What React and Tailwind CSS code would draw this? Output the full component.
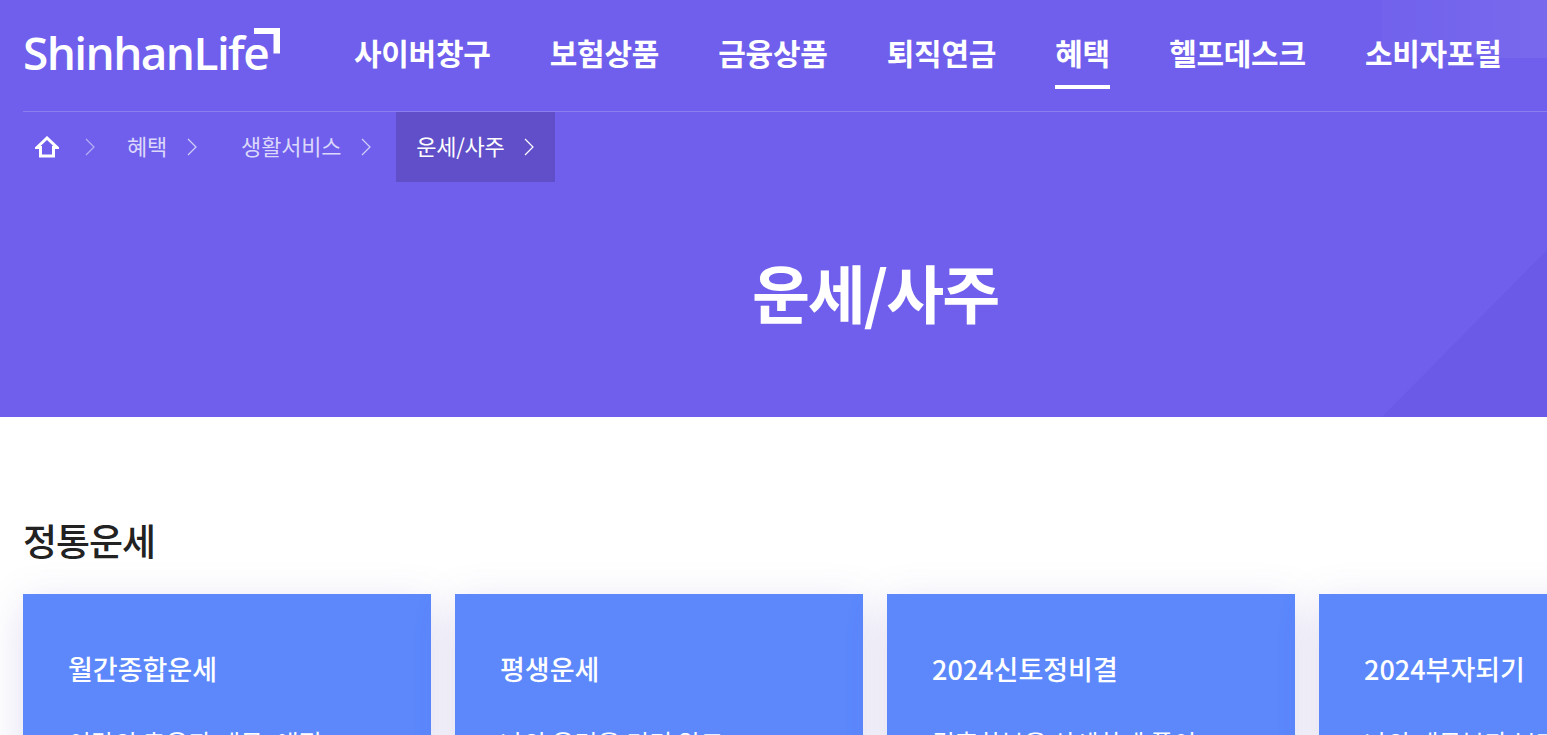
import React from 'react';

const font = { fontFamily: '"Noto Sans CJK KR", "Noto Sans", sans-serif' };

const menus = [
  { label: '사이버창구' },
  { label: '보험상품' },
  { label: '금융상품' },
  { label: '퇴직연금' },
  { label: '혜택', active: true },
  { label: '헬프데스크' },
  { label: '소비자포털' },
];

const cards = [
  { title: '월간종합운세', desc: '이달의 총운과 재물, 애정' },
  { title: '평생운세', desc: '나의 운명을 미리 알고' },
  { title: '2024신토정비결', desc: '길흉화복을 상세하게 풀이' },
  { title: '2024부자되기', desc: '나의 재물복과 부자가 될' },
];

const Crumb = ({ className }) => (
  <svg className={className} width="10" height="18" viewBox="0 0 10 18" fill="none" stroke="currentColor" strokeWidth="1.2">
    <path d="M1 1L9 9L1 17" />
  </svg>
);

const Logo = () => (
  <div className="relative w-[258px] h-[46px] mt-[28px]">
    <span className="absolute left-0 top-[-4px] text-[46px] leading-[56px] font-semibold tracking-[-1.6px] text-white font-['Open_Sans',sans-serif] whitespace-nowrap">
      ShinhanLife
    </span>
    <svg className="absolute right-[1px] top-0" width="26" height="26" viewBox="0 0 26 26" fill="none">
      <path d="M0 0H26V25.5H19.5V6H0Z" fill="white" />
    </svg>
  </div>
);

const App = () => {
  return (
    <div className="w-[1547px] h-[735px] overflow-hidden bg-white" style={font}>
      <div className="relative h-[417px] bg-[#6f5fec] overflow-hidden">
        {/* background shapes */}
        <div className="absolute right-0 top-0 w-[165px] h-[58px] bg-linear-to-r from-white/[0.02] to-white/[0.06]" />
        <svg className="absolute right-0 top-[250px]" width="165" height="167" viewBox="0 0 165 167">
          <path d="M165 0V167H0Z" fill="#6a5ae7" />
        </svg>

        <div className="relative flex items-start pl-[23px] h-[111px]">
          <Logo />
          <nav className="flex ml-[73px] gap-[59.3px]">
            {menus.map((m) => (
              <div key={m.label} className="relative h-[111px] flex items-center pb-[8px]">
                <span className="text-[30px] font-bold tracking-[-0.3px] text-white leading-none whitespace-nowrap">
                  {m.label}
                </span>
                {m.active && <span className="absolute left-0 right-0 top-[85px] h-[4px] bg-white" />}
              </div>
            ))}
          </nav>
        </div>

        <div className="relative ml-[23px] border-t border-white/20 h-[71px] flex items-start">
          <div className="flex items-center h-[70px]">
            <svg className="ml-[12px]" width="24" height="22" viewBox="0 0 24 22" fill="none" stroke="white" strokeWidth="3">
              <path d="M2 11.5L12 2L22 11.5H18.5V20H5.5V11.5Z" />
            </svg>
            <Crumb className="ml-[26px] text-white/50" />
            <span className="ml-[32px] pb-[3px] text-[22px] text-[#dcd8fb] tracking-[-0.2px]">혜택</span>
            <Crumb className="ml-[20px] text-white/70" />
            <span className="ml-[44px] pb-[3px] text-[22px] text-[#dcd8fb] tracking-[-0.2px]">생활서비스</span>
            <Crumb className="ml-[20px] text-white/70" />
          </div>
          <div className="ml-[25px] h-[70px] w-[159px] bg-[#604fc8] flex items-center pl-[20px]">
            <span className="pb-[3px] text-[22px] text-white tracking-[-0.3px]">운세/사주</span>
            <Crumb className="ml-[20px] text-white" />
          </div>
        </div>

        <h1 className="relative mt-[69px] text-center pl-[203px] text-[63px] leading-[80px] font-bold tracking-[-2px] text-white">
          운세/사주
        </h1>
      </div>

      <div className="pl-[23px] pt-[98px]">
        <h2 className="text-[37px] leading-[50px] font-medium tracking-[-1px] text-[#222]">정통운세</h2>
        <div className="flex gap-[24px] mt-[29px]">
          {cards.map((c) => (
            <div
              key={c.title}
              className="w-[408px] h-[300px] shrink-0 bg-[#5c88fc] px-[45px] pt-[54px] text-white shadow-[0_10px_40px_rgba(90,70,180,0.18)]"
            >
              <p className="text-[27px] leading-[42px] font-medium whitespace-nowrap">{c.title}</p>
              <p className="mt-[37px] text-[25px] leading-[30px] whitespace-nowrap">{c.desc}</p>
            </div>
          ))}
        </div>
      </div>
    </div>
  );
};

export default App;
